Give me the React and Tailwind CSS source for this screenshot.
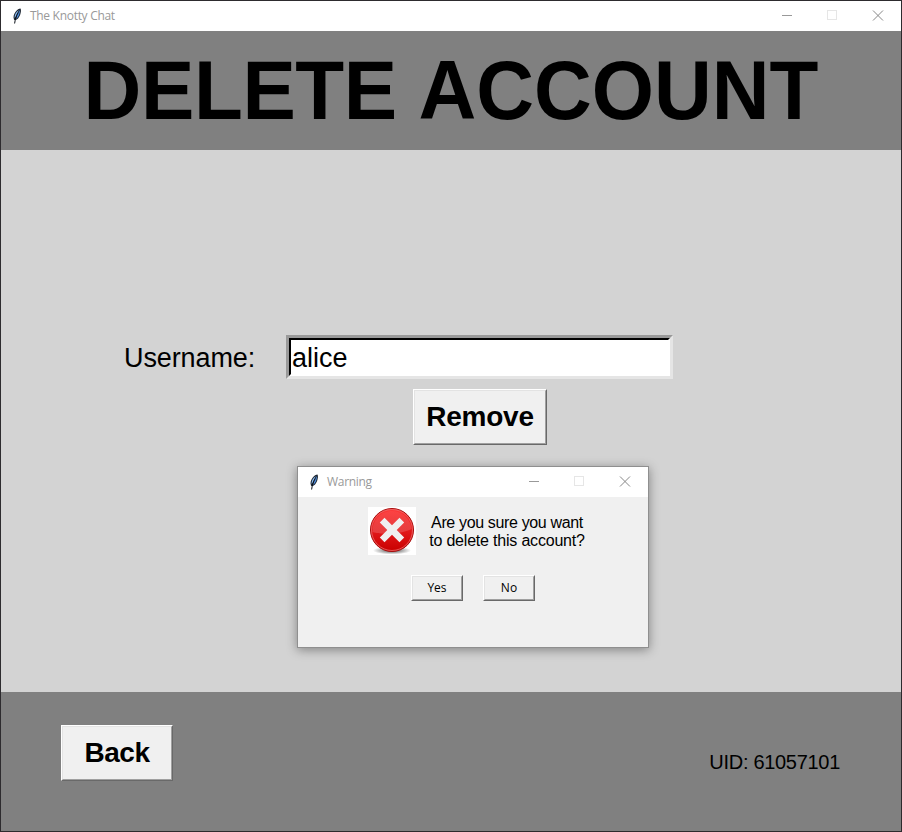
import React from 'react';

const arial = "font-['Liberation_Sans',Arial,sans-serif]";
const segoe = "font-['Open_Sans','Noto_Sans',sans-serif]";

function Feather() {
  return (
    <svg className="h-4 w-4" viewBox="0 0 16 16">
      <path d="M5 11.800C3.900 9 4.800 6 6.800 3.600 8.300 1.800 10 .7 11.500.6c.8 1.500.5 4-.4 6.300-1 2.600-2.800 4.600-4.800 5.400z" fill="#1b2430" />
      <path d="M5.600 10.200C5.200 7.500 6.800 4.200 9.800 2.100L6.800 8.300z" fill="#8dbcf0" />
      <path d="M10.800 2C11.200 5.300 9.700 8.900 7.100 10.900l.9-3.600z" fill="#4f8fe0" />
      <path d="M9.300 4.500C7.500 7.500 6.200 11 5.600 15.500" fill="none" stroke="#0c1119" strokeWidth="1" />
    </svg>
  );
}

function TitleBar({ title }) {
  return (
    <div className="flex h-[30px] shrink-0 items-center bg-white pl-2">
      <Feather />
      <span className={`ml-[5px] flex-1 text-[12px] leading-[16px] tracking-[-0.3px] text-[#999] ${segoe}`}>{title}</span>
      <svg className="h-[30px] w-[138px]" viewBox="0 0 138 30" shapeRendering="crispEdges" fill="none">
        <path d="M19 14.500h10" stroke="#999" />
        <rect x="64.500" y="9.500" width="9" height="9" stroke="#e6e6e6" />
        <path d="M110 9.500l10 10M120 9.500l-10 10" stroke="#888" shapeRendering="auto" />
      </svg>
    </div>
  );
}

function Button({ className, children }) {
  return (
    <button className={`block border border-t-white border-l-white border-r-[#696969] border-b-[#696969] ${className}`}>
      <span className="flex h-full w-full items-center justify-center border border-t-[#e3e3e3] border-l-[#e3e3e3] border-r-[#a0a0a0] border-b-[#a0a0a0] bg-[#f0f0f0] text-black">
        {children}
      </span>
    </button>
  );
}

function ErrorIcon() {
  return (
    <svg className="h-12 w-12 bg-white" viewBox="0 0 48 48">
      <defs>
        <linearGradient id="red" x1="0" y1="0" x2="0" y2="1">
          <stop offset="0" stopColor="#ff3a3a" />
          <stop offset="0.5" stopColor="#e31a1c" />
          <stop offset="1" stopColor="#c80000" />
        </linearGradient>
        <linearGradient id="gloss" x1="0" y1="0" x2="0" y2="1">
          <stop offset="0" stopColor="#fff" stopOpacity="0.06" />
          <stop offset="1" stopColor="#fff" stopOpacity="0.17" />
        </linearGradient>
        <radialGradient id="ground">
          <stop offset="0" stopColor="#000" stopOpacity="0.7" />
          <stop offset="1" stopColor="#000" stopOpacity="0" />
        </radialGradient>
      </defs>
      <ellipse cx="24" cy="43.500" rx="19" ry="4" fill="url(#ground)" />
      <circle cx="24" cy="23" r="21.500" fill="url(#red)" stroke="#a80b0b" />
      <circle cx="24" cy="23" r="20.500" fill="none" stroke="#ee6a6a" strokeWidth="0.8" />
      <path d="M4.500 25a19.500 19.500 0 1 1 39 -3C38 24.500 31 26.500 21 26.500 13 26.500 9 26.500 4.500 25z" fill="url(#gloss)" />
      <path d="M16.500 10.800l7.500 7.500 7.500-7.500 4.700 4.700-7.500 7.500 7.500 7.500-4.700 4.700-7.500-7.500-7.500 7.500-4.700-4.700 7.500-7.500-7.500-7.500z" fill="#f0f0f0" />
    </svg>
  );
}

function WarningDialog() {
  return (
    <div className="absolute left-[296px] top-[316px] flex h-[182px] w-[352px] flex-col border border-[#8f8f8f] bg-[#f0f0f0] shadow-[0_2px_10px_0px_rgba(0,0,0,0.38)]">
      <TitleBar title="Warning" />
      <div className="flex pl-[70px] pt-[10px]">
        <ErrorIcon />
        <p className={`ml-[12px] mt-[7px] w-[158px] whitespace-nowrap text-center text-[16px] leading-[18px] text-black ${arial}`}>
          <span className="block tracking-[-0.35px]">Are you sure you want</span>
          <span className="block tracking-[-0.2px]">to delete this account?</span>
        </p>
      </div>
      <div className={`mt-5 flex gap-5 pl-[113px] text-[12px] leading-[16px] ${segoe}`}>
        <Button className="h-[26px] w-[52px]">Yes</Button>
        <Button className="h-[26px] w-[52px]">No</Button>
      </div>
    </div>
  );
}

export default function App() {
  return (
    <div className={`flex h-[832px] w-[902px] flex-col overflow-hidden border border-[#2d2b2e] text-black ${arial}`}>
      <TitleBar title="The Knotty Chat" />
      <header className="flex h-[119px] shrink-0 items-center justify-center bg-[#808080]">
        <h1 className="whitespace-nowrap text-[80px] font-bold leading-[92px] scale-y-[1.05]">
          <span className="tracking-[-0.4px]">DELETE</span>
          <span className="ml-[2.400px]"> ACCOUNT</span>
        </h1>
      </header>
      <main className="relative h-[542px] shrink-0 bg-[#d3d3d3] pt-[185px]">
        <div className="flex items-center pl-[123px]">
          <label className="w-[162px] pt-[2px] text-[27px] leading-[32px] tracking-[-0.1px]">Username:</label>
          <div className="h-[44px] w-[387px] border-[3px] border-b-[#e5e5e5] border-l-[#999] border-r-[#e5e5e5] border-t-[#999]">
            <div className="flex h-full items-center border-2 border-b-white border-l-black border-r-white border-t-black bg-white pl-px pt-[2px] text-[27px] leading-[32px]">
              alice
            </div>
          </div>
        </div>
        <Button className="ml-[412px] mt-[10px] h-[56px] w-[134px] text-[28px] font-bold leading-[32px] tracking-[-0.2px]">Remove</Button>
        <WarningDialog />
      </main>
      <footer className="flex h-[139px] shrink-0 items-start justify-between bg-[#808080] pl-[60px] pr-[61px] pt-[33px]">
        <Button className="h-[56px] w-[112px] text-[28px] font-bold leading-[32px] tracking-[-0.5px]">Back</Button>
        <span className="mt-[25px] text-[20px] leading-[24px] tracking-[-0.3px]">UID: 61057101</span>
      </footer>
    </div>
  );
}
